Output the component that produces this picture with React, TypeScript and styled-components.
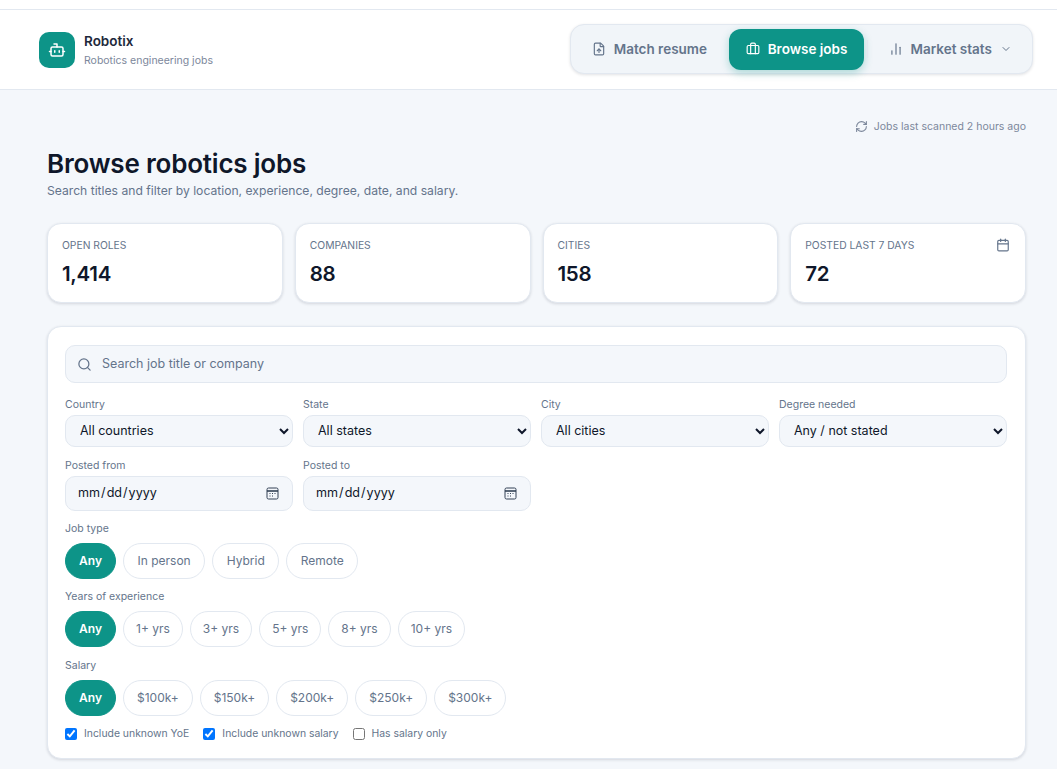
import React from 'react';
import styled, { createGlobalStyle } from 'styled-components';
import { Bot, Briefcase, Calendar, ChartNoAxesColumn, ChevronDown, FileUp, RefreshCw, Search } from 'lucide-react';

const Global = createGlobalStyle`
  html, body { margin: 0; padding: 0; background: #f4f7fb; }
  body { font-family: "Inter", "Noto Sans", sans-serif; overflow: hidden; }
  * { box-sizing: border-box; }
`;

const TopStrip = styled.div`
  height: 10px;
  background: #fff;
  border-bottom: 1px solid #e2e8f0;
`;

const Header = styled.header`
  height: 80px;
  background: #fff;
  border-bottom: 1px solid #e2e8f0;
  padding: 14px 24px 0 39px;
  display: flex;
  justify-content: space-between;
  align-items: flex-start;
`;

const Brand = styled.div`
  display: flex;
  align-items: center;
  gap: 9px;
  margin-top: 7px;
`;

const LogoBox = styled.div`
  width: 36px;
  height: 36px;
  border-radius: 10px;
  background: #0d9488;
  color: #fff;
  display: flex;
  align-items: center;
  justify-content: center;
`;

const BrandText = styled.div`
  display: flex;
  flex-direction: column;
  gap: 4px;
  padding-top: 2px;
`;

const BrandName = styled.span`
  font-size: 13.5px;
  font-weight: 600;
  line-height: 17px;
  color: #1e293b;
`;

const BrandTag = styled.span`
  font-size: 10.5px;
  line-height: 14px;
  color: #7c879b;
`;

const Nav = styled.nav`
  width: 463px;
  height: 50px;
  background: #f1f5f9;
  border: 1px solid #e2e8f0;
  border-radius: 14px;
  box-shadow: 0 1px 3px rgba(15, 23, 42, 0.12);
  padding: 4px 0 0 5px;
  display: flex;
  align-items: flex-start;
`;

const NavItem = styled.div<{ $active?: boolean; $w: number; $shift?: number }>`
  width: ${p => p.$w}px;
  height: 41px;
  padding: 0 ${p => p.$shift ?? 0}px 1px 0;
  border-radius: 12px;
  display: flex;
  align-items: center;
  justify-content: center;
  gap: 8px;
  font-size: 13.5px;
  font-weight: 600;
  color: ${p => (p.$active ? '#fff' : '#64748b')};
  background: ${p => (p.$active ? '#0d9488' : 'transparent')};
  box-shadow: ${p => (p.$active ? '0 3px 8px rgba(13, 148, 136, 0.3)' : 'none')};
`;

const NavDivider = styled.div`
  width: 1px;
  height: 18px;
  margin: 11px 0 0 3px;
  background: #e2e8f0;
`;

const Main = styled.main`
  padding: 0 31px 10px 47px;
`;

const ScanRow = styled.div`
  height: 48px;
  padding-top: 24px;
  display: flex;
  justify-content: flex-end;
  align-items: center;
  gap: 6px;
  font-size: 10.5px;
  color: #7c879b;
`;

const Title = styled.h1`
  margin: 9px 0 0;
  font-size: 26px;
  line-height: 34px;
  font-weight: 600;
  letter-spacing: -0.2px;
  color: #0f172a;
`;

const Subtitle = styled.p`
  margin: 1px 0 0;
  font-size: 12.15px;
  line-height: 18px;
  color: #64748b;
`;

const Stats = styled.div`
  margin-top: 23px;
  display: grid;
  grid-template-columns: repeat(4, 1fr);
  gap: 12px;
`;

const StatCard = styled.div`
  position: relative;
  height: 80px;
  background: #fff;
  border: 1px solid #e2e8f0;
  border-radius: 14px;
  box-shadow: 0 1px 3px rgba(15, 23, 42, 0.14);
  padding: 14px 14px 0;
`;

const StatLabel = styled.div`
  font-size: 10.3px;
  line-height: 14px;
  color: #64748b;
  text-transform: uppercase;
`;

const StatValue = styled.div`
  margin-top: 8px;
  font-size: 20.5px;
  line-height: 28px;
  font-weight: 600;
  letter-spacing: -0.3px;
  color: #0f172a;
`;

const StatIcon = styled.div`
  position: absolute;
  top: 14px;
  right: 15px;
  color: #64748b;
  display: flex;
`;

const FilterCard = styled.section`
  margin-top: 23px;
  height: 433px;
  background: #fff;
  border: 1px solid #e2e8f0;
  border-radius: 14px;
  box-shadow: 0 1px 3px rgba(15, 23, 42, 0.14);
  padding: 18px 18px 0 17px;
`;

const SearchBox = styled.div`
  height: 38px;
  background: #f4f7fb;
  border: 1px solid #e2e8f0;
  border-radius: 10px;
  padding-left: 11px;
  display: flex;
  align-items: center;
  gap: 10px;
  color: #64748b;
`;

const SearchInput = styled.input`
  flex: 1;
  padding: 0 0 2px;
  border: 0;
  outline: 0;
  background: transparent;
  font: inherit;
  font-size: 12.5px;
  &::placeholder { color: #64748b; opacity: 1; }
`;

const FieldGrid = styled.div`
  display: grid;
  grid-template-columns: repeat(4, 1fr);
  gap: 12px 10px;
  margin-top: 15px;
`;

const Field = styled.label`
  display: flex;
  flex-direction: column;
  gap: 3px;
`;

const Caption = styled.span`
  display: block;
  font-size: 10.5px;
  line-height: 14px;
  color: #64748b;
`;

const Select = styled.select`
  height: 32px;
  width: 100%;
  background: #f4f7fb;
  border: 1px solid #e2e8f0;
  border-radius: 10px;
  padding: 0 10px 1px;
  font: inherit;
  font-size: 12.5px;
  color: #0f172a;
`;

const DateWrap = styled.div`
  position: relative;
  color: #334155;
  svg {
    position: absolute;
    top: 11px;
    right: 14px;
    pointer-events: none;
  }
`;

const DateInput = styled.input`
  display: block;
  height: 35px;
  width: 100%;
  background: #f4f7fb;
  border: 1px solid #e2e8f0;
  border-radius: 10px;
  padding: 0 11px 2px;
  font: inherit;
  font-size: 12.6px;
  color: #0f172a;
  &::-webkit-calendar-picker-indicator { opacity: 0; }
`;

const Group = styled.div`
  margin-top: 11.2px;
  &:first-of-type { margin-top: 10px; }
`;

const Chips = styled.div`
  display: flex;
  gap: 7px;
  margin-top: 7px;
`;

const Chip = styled.div<{ $active?: boolean; $pad: number }>`
  height: 36px;
  width: ${p => (p.$active ? '51px' : 'auto')};
  padding: 0 ${p => p.$pad}px 1px;
  border-radius: 18px;
  display: flex;
  align-items: center;
  justify-content: center;
  font-size: 12px;
  font-weight: ${p => (p.$active ? 600 : 400)};
  color: ${p => (p.$active ? '#fff' : '#64748b')};
  background: ${p => (p.$active ? '#0d9488' : '#fff')};
  border: 1px solid ${p => (p.$active ? '#0d9488' : '#e2e8f0')};
`;

const Checks = styled.div`
  display: flex;
  gap: 14px;
  margin-top: 11px;
`;

const CheckLabel = styled.label`
  display: flex;
  align-items: center;
  gap: 7px;
  font-size: 10.4px;
  line-height: 14px;
  color: #64748b;
  input { margin: 0; width: 12px; height: 12px; }
`;

const chipGroups = [
  { label: 'Job type', pad: 13.5, items: ['Any', 'In person', 'Hybrid', 'Remote'] },
  { label: 'Years of experience', pad: 12, items: ['Any', '1+ yrs', '3+ yrs', '5+ yrs', '8+ yrs', '10+ yrs'] },
  { label: 'Salary', pad: 13, items: ['Any', '$100k+', '$150k+', '$200k+', '$250k+', '$300k+'] },
];

const CalendarGlyph = () => (
  <svg width="13" height="13" viewBox="0 0 13 13" fill="none" stroke="currentColor">
    <rect x="1" y="1" width="11" height="11" rx="1.5" />
    <path d="M1 4h11" strokeWidth="1.6" />
    <path d="M3.5 6.5h1M6 6.5h1M8.5 6.5h1M3.5 9h1M6 9h1" />
  </svg>
);

export default function App() {
  return (
    <>
      <Global />
      <TopStrip />
      <Header>
        <Brand>
          <LogoBox><Bot size={18} /></LogoBox>
          <BrandText>
            <BrandName>Robotix</BrandName>
            <BrandTag>Robotics engineering jobs</BrandTag>
          </BrandText>
        </Brand>
        <Nav>
          <NavItem $w={153} $shift={6}><FileUp size={14} />Match resume</NavItem>
          <NavItem $w={136} $active><Briefcase size={14} />Browse jobs</NavItem>
          <NavDivider />
          <NavItem $w={164}>
            <ChartNoAxesColumn size={14} />Market stats<ChevronDown size={12} />
          </NavItem>
        </Nav>
      </Header>
      <Main>
        <ScanRow><RefreshCw size={13} />Jobs last scanned 2 hours ago</ScanRow>
        <Title>Browse robotics jobs</Title>
        <Subtitle>Search titles and filter by location, experience, degree, date, and salary.</Subtitle>
        <Stats>
          <StatCard><StatLabel>Open roles</StatLabel><StatValue>1,414</StatValue></StatCard>
          <StatCard><StatLabel>Companies</StatLabel><StatValue>88</StatValue></StatCard>
          <StatCard><StatLabel>Cities</StatLabel><StatValue>158</StatValue></StatCard>
          <StatCard>
            <StatLabel>Posted last 7 days</StatLabel>
            <StatValue>72</StatValue>
            <StatIcon><Calendar size={14} /></StatIcon>
          </StatCard>
        </Stats>
        <FilterCard>
          <SearchBox>
            <Search size={15} />
            <SearchInput placeholder="Search job title or company" />
          </SearchBox>
          <FieldGrid>
            <Field><Caption>Country</Caption><Select><option>All countries</option></Select></Field>
            <Field><Caption>State</Caption><Select><option>All states</option></Select></Field>
            <Field><Caption>City</Caption><Select><option>All cities</option></Select></Field>
            <Field><Caption>Degree needed</Caption><Select><option>Any / not stated</option></Select></Field>
            <Field><Caption>Posted from</Caption><DateWrap><DateInput type="date" /><CalendarGlyph /></DateWrap></Field>
            <Field><Caption>Posted to</Caption><DateWrap><DateInput type="date" /><CalendarGlyph /></DateWrap></Field>
          </FieldGrid>
          {chipGroups.map(g => (
            <Group key={g.label}>
              <Caption>{g.label}</Caption>
              <Chips>
                {g.items.map((item, i) => <Chip key={item} $active={i === 0} $pad={g.pad}>{item}</Chip>)}
              </Chips>
            </Group>
          ))}
          <Checks>
            <CheckLabel><input type="checkbox" defaultChecked />Include unknown YoE</CheckLabel>
            <CheckLabel><input type="checkbox" defaultChecked />Include unknown salary</CheckLabel>
            <CheckLabel><input type="checkbox" />Has salary only</CheckLabel>
          </Checks>
        </FilterCard>
      </Main>
    </>
  );
}
